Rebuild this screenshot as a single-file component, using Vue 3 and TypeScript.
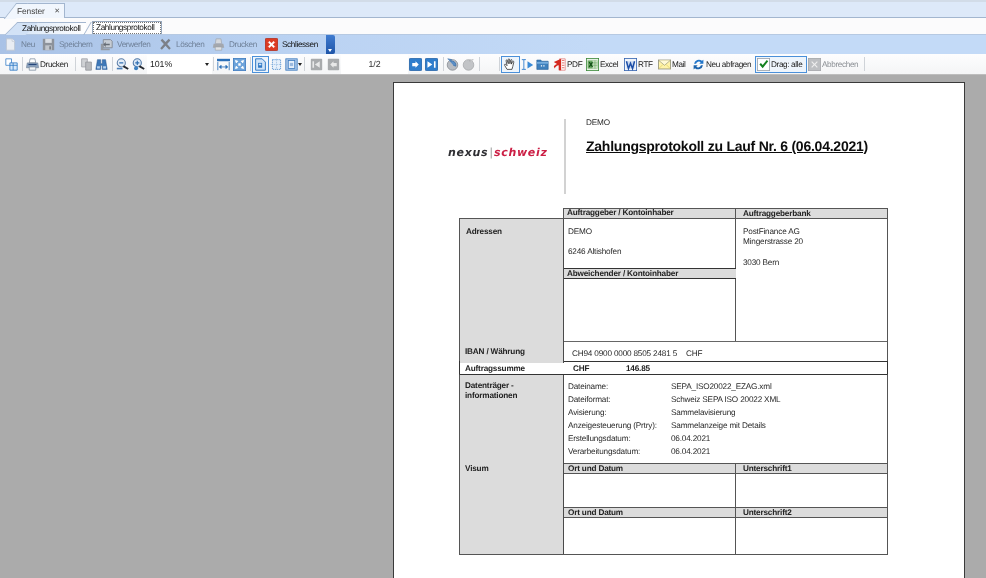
<script setup lang="ts">
import { computed } from 'vue'

type Raw = [number, string, string?, string?]

// [left edge, kind, icon, label]; each item runs up to the left edge of the next one
function layout(raw: Raw[], end: number) {
  return raw.map((r, i) => ({
    x: r[0],
    kind: r[1],
    icon: r[2] ?? '',
    label: r[3] ?? '',
    w: (i + 1 < raw.length ? raw[i + 1][0] : end) - r[0],
  }))
}

const ribbon = computed(() =>
  layout(
    [
      [4, 'off', 'neu', 'Neu'],
      [42, 'off', 'save', 'Speichern'],
      [100, 'off', 'discard', 'Verwerfen'],
      [159, 'off', 'x', 'Löschen'],
      [212, 'off', 'printgray', 'Drucken'],
      [265, 'on', 'close', 'Schliessen'],
    ],
    325,
  ),
)

const tools = computed(() =>
  layout(
    [
      [4, 'tool', 'layout'],
      [21, 'sep'],
      [25, 'tool', 'print', 'Drucken'],
      [74, 'sep'],
      [79, 'tool', 'copy'],
      [94, 'tool', 'binoc'],
      [111, 'sep'],
      [115, 'tool', 'zoomout'],
      [131, 'tool', 'zoomin'],
      [147, 'zoom'],
      [212, 'sep'],
      [216, 'tool', 'fitw'],
      [232, 'tool', 'fitp'],
      [249, 'sep'],
      [252, 'active', 'pg1'],
      [269, 'tool', 'pg2'],
      [284, 'tool', 'pg3'],
      [298, 'arrow'],
      [303, 'sep'],
      [309, 'tool', 'first'],
      [326, 'tool', 'prev'],
      [341, 'pager'],
      [408, 'tool', 'next'],
      [424, 'tool', 'last'],
      [442, 'sep'],
      [445, 'tool', 'back'],
      [461, 'tool', 'fwd'],
      [478, 'sep'],
      [498, 'sep'],
      [501, 'active', 'hand'],
      [520, 'tool', 'cursor'],
      [535, 'tool', 'folder'],
      [552, 'tool', 'pdf', 'PDF'],
      [585, 'tool', 'excel', 'Excel'],
      [623, 'tool', 'word', 'RTF'],
      [657, 'tool', 'mail', 'Mail'],
      [691, 'tool', 'refresh', 'Neu abfragen'],
      [755, 'active', 'check', 'Drag: alle'],
      [807, 'off', 'cancel', 'Abbrechen'],
      [863, 'sep'],
    ],
    866,
  ),
)

const details = [
  ['Dateiname:', 'SEPA_ISO20022_EZAG.xml'],
  ['Dateiformat:', 'Schweiz SEPA ISO 20022 XML'],
  ['Avisierung:', 'Sammelavisierung'],
  ['Anzeigesteuerung (Prtry):', 'Sammelanzeige mit Details'],
  ['Erstellungsdatum:', '06.04.2021'],
  ['Verarbeitungsdatum:', '06.04.2021'],
]
</script>

<template>
  <div class="app">
    <svg class="defs" width="0" height="0">
      <symbol id="i-neu" viewBox="0 0 16 16"><path d="M3 1h7l3 3v11H3z" fill="#e9edf3" stroke="#bcc5d2"/><path d="M10 1v3h3" fill="#fff" stroke="#bcc5d2"/></symbol>
      <symbol id="i-save" viewBox="0 0 16 16"><path d="M1 1h14v14H1z" fill="#8d929a"/><path d="M4 1h8v5H4z" fill="#d9dde3"/><path d="M4 9h8v6H4z" fill="#c1c5cb"/><path d="M9 10h2v4H9z" fill="#777c84"/></symbol>
      <symbol id="i-discard" viewBox="0 0 16 16"><path d="M4 2h9l2 2v8H4z" fill="#c6ccd4" stroke="#7d838c"/><path d="M1 7h3v6h8v2H1z" fill="#959aa2"/><path d="M12 7H7V5L4 8l3 3V9h5z" fill="#666c75"/></symbol>
      <symbol id="i-x" viewBox="0 0 16 16"><path d="M2 3l2-2 4 4 4-4 2 2-4 4.500 4.500 5-2 2-4.500-5-4.500 5-2-2 4.500-5z" fill="#7c8088"/></symbol>
      <symbol id="i-printgray" viewBox="0 0 16 16"><path d="M5 1h6l1 6H4z" fill="#d4d7dc" stroke="#969aa1" stroke-width=".7"/><path d="M2 7h12l1 5H1z" fill="#a3a7ae"/><path d="M4 11h8v4H4z" fill="#dfe1e5" stroke="#959aa0" stroke-width=".7"/></symbol>
      <symbol id="i-close" viewBox="0 0 16 16"><rect x=".5" y=".5" width="15" height="15" rx="1" fill="#dc3b24" stroke="#b32a18"/><path d="M4 5.500l1.500-1.500L8 6.500 10.500 4 12 5.500 9.500 8l2.500 2.500-1.500 1.500L8 9.500 5.500 12 4 10.500 6.500 8z" fill="#fff" stroke="#fff" stroke-width=".5"/></symbol>
      <symbol id="i-layout" viewBox="0 0 16 16"><path d="M1 1h7v8H1z" fill="#fff" stroke="#3d83c9"/><path d="M6 6h9v9H6z" fill="#d6e8fa" stroke="#2e78c4"/><path d="M6 9h9M10 6v9" stroke="#2e78c4"/></symbol>
      <symbol id="i-print" viewBox="0 0 16 16"><path d="M5 1h6l1 5H4z" fill="#fff" stroke="#6a7c92" stroke-width=".8"/><path d="M1.500 6h13l1 6H.5z" fill="#8fa6c2" stroke="#5a6c82" stroke-width=".6"/><path d="M3 8h10" stroke="#26477a" stroke-width="1.500"/><path d="M4 11h8v4H4z" fill="#f4f6f8" stroke="#6a7c92" stroke-width=".8"/></symbol>
      <symbol id="i-copy" viewBox="0 0 16 16"><path d="M2 1h7v10H2z" fill="#cfd1d4" stroke="#a0a3a7"/><path d="M7 5h7v10H7z" fill="#b8babd" stroke="#95989c"/></symbol>
      <symbol id="i-binoc" viewBox="0 0 16 16"><path d="M3 2h4v5h2V2h4l2 12H9V9H7v5H1z" fill="#3e78b8" stroke="#1f4f88" stroke-width=".6"/><path d="M2.500 10h3.500v3H2.500zM10 10h3.500v3H10z" fill="#b7d2ef"/></symbol>
      <symbol id="i-zoomout" viewBox="0 0 16 16"><circle cx="6.500" cy="6" r="5" fill="#e4edf7" stroke="#5b7ea8" stroke-width="1.300"/><path d="M4 6h5" stroke="#2e6db0" stroke-width="1.500"/><path d="M9 10l6 3.500" stroke="#24282e" stroke-width="2.400"/><path d="M1 12h7v2H1z" fill="#4a7fb8"/></symbol>
      <symbol id="i-zoomin" viewBox="0 0 16 16"><circle cx="6.500" cy="6" r="5" fill="#dbe8f6" stroke="#4f77a6" stroke-width="1.300"/><path d="M4 6h5M6.500 3.500v5" stroke="#2e6db0" stroke-width="1.400"/><path d="M9 10l6 3.500" stroke="#24282e" stroke-width="2.400"/><circle cx="5" cy="12.500" r="2.500" fill="#3d81c2"/></symbol>
      <symbol id="i-fitw" viewBox="0 0 16 16"><path d="M0 1v3h16V1z" fill="#2a6fb8"/><path d="M1 5v10M15 5v10" stroke="#2a6fb8"/><path d="M3 11h10M3 11l2-2v4zM13 11l-2-2v4z" stroke="#2a6fb8" fill="#2a6fb8"/></symbol>
      <symbol id="i-fitp" viewBox="0 0 16 16"><rect x=".5" y=".5" width="15" height="15" fill="#6da3da" stroke="#3f7cbf"/><path d="M3 3l3 1-2 2zM13 3l-1 3-2-2zM3 13l1-3 2 2zM13 13l-3-1 2-2z" fill="#fff" stroke="#fff"/><rect x="6.500" y="6.500" width="3" height="3" fill="#fff"/></symbol>
      <symbol id="i-pg1" viewBox="0 0 16 16"><path d="M2 1h8l4 4v10H2z" fill="#cfe3f8" stroke="#2e78c4" stroke-width="1.200"/><path d="M5 6h5v6H5z" fill="#2e78c4"/><path d="M6 7h3v2H6z" fill="#cfe3f8"/></symbol>
      <symbol id="i-pg2" viewBox="0 0 16 16"><rect x="3" y="2" width="10" height="12" fill="#e6f0fb" stroke="#4a8bcd" stroke-dasharray="1.500 1"/><path d="M1 8h14M8 1v14" stroke="#8db5de" stroke-dasharray="1 1"/></symbol>
      <symbol id="i-pg3" viewBox="0 0 16 16"><rect x="1" y="1" width="14" height="14" fill="#a9c6e8" stroke="#3f7cbf"/><rect x="4" y="3" width="8" height="10" fill="#e6f0fb" stroke="#3f7cbf"/><path d="M6 6h4v4H6z" fill="#9ab9de"/></symbol>
      <symbol id="i-first" viewBox="0 0 16 16"><rect x="1" y="1" width="14" height="14" rx="1" fill="#a9abad"/><path d="M3 4h2v8H3zM12 4v8L6 8z" fill="#e8e8e8"/></symbol>
      <symbol id="i-prev" viewBox="0 0 16 16"><rect x="1" y="1" width="14" height="14" rx="1" fill="#a9abad"/><path d="M12 6v4H8v2L4 8l4-4v2z" fill="#e8e8e8"/></symbol>
      <symbol id="i-next" viewBox="0 0 16 16"><rect x=".5" y=".5" width="15" height="15" rx="1" fill="#2f7dcc" stroke="#1d5fa5"/><path d="M4 6v4h4v2l4-4-4-4v2z" fill="#fff"/></symbol>
      <symbol id="i-last" viewBox="0 0 16 16"><rect x=".5" y=".5" width="15" height="15" rx="1" fill="#2f7dcc" stroke="#1d5fa5"/><path d="M3 4l6 4-6 4zM11 4h2v8h-2z" fill="#fff"/></symbol>
      <symbol id="i-back" viewBox="0 0 16 16"><circle cx="8" cy="8.500" r="6.500" fill="#b8bcc2" stroke="#8a8e94"/><path d="M2 1l5 1-1.500 2A5 5 0 0 1 12 10l-3-1" fill="#5a8ec6" stroke="#3f74ad"/></symbol>
      <symbol id="i-fwd" viewBox="0 0 16 16"><circle cx="8" cy="8.500" r="6.500" fill="#c2c4c7" stroke="#a8aaad"/><path d="M14 2l-5 1 1.500 2" fill="#d8d9db" stroke="#a8aaad"/></symbol>
      <symbol id="i-hand" viewBox="0 0 16 16"><path d="M5 14L2 9c-.7-1.300.7-1.800 1.500-1L5 9.500 3.800 3.500c-.3-1.300 1.300-1.500 1.600-.4L6.500 7 6.400 2c0-1.300 1.700-1.300 1.700 0L8.500 7l.9-4.300c.3-1.200 1.800-.9 1.600.3L10.300 7.500l1.500-3c.5-1 1.900-.5 1.500.6L12 10.500 11 14z" fill="#fff" stroke="#222" stroke-width=".9"/></symbol>
      <symbol id="i-cursor" viewBox="0 0 16 16"><path d="M1 2h2.500M6 2H3.500v12H1M3.500 14H6" fill="none" stroke="#2f7dcc" stroke-width="1.100"/><path d="M8 4l7 4.500L8 13z" fill="#3a8ad6"/></symbol>
      <symbol id="i-folder" viewBox="0 0 16 16"><path d="M1 4V2.500h5L7 4h8v10H1z" fill="#3f80bd" stroke="#255e96" stroke-width=".7"/><path d="M1 5h14v2H1z" fill="#7ab0e0"/><path d="M6 9h1.500v1.500H6zM9 9h1.500v1.500H9z" fill="#fff"/></symbol>
      <symbol id="i-pdf" viewBox="0 0 16 16"><path d="M8 1h7v14H8z" fill="#fff" stroke="#d9534f" stroke-width=".7"/><path d="M1 5l9-4v14H7V9C5 9 3 11 2 13l-1-3c1-1 3-2 4-2.500z" fill="#d5281f"/><path d="M11 3h3M11 6h3M11 9h3M11 12h3" stroke="#d5281f" stroke-width=".8"/></symbol>
      <symbol id="i-excel" viewBox="0 0 16 16"><rect x=".5" y=".5" width="15" height="15" fill="#e9f2e4" stroke="#3c8a3a"/><path d="M2 3h12v10H2z" fill="#69a862"/><path d="M8 3h6v10H8z" fill="#c8dfc2"/><path d="M4 5l4 6M8 5l-4 6" stroke="#134f18" stroke-width="1.500"/><path d="M8 6h6M8 9h6M11 3v10" stroke="#69a862" stroke-width=".7"/></symbol>
      <symbol id="i-word" viewBox="0 0 16 16"><rect x=".5" y=".5" width="15" height="15" fill="#f1f5fb" stroke="#3564b0"/><path d="M3 4h10v9H3z" fill="#c9d9f0"/><path d="M3 4l2.500 9L8 6.500 10.500 13 13 4" fill="none" stroke="#1c4ea8" stroke-width="1.800"/></symbol>
      <symbol id="i-mail" viewBox="0 0 16 16"><rect x=".5" y="2.500" width="15" height="11" fill="#fff3a8" stroke="#8f8f78"/><path d="M1 3l7 6 7-6" fill="#fff9d6" stroke="#8f8f78" stroke-width=".8"/><path d="M1 13l5-5M15 13l-5-5" stroke="#d9c95c" stroke-width=".8"/></symbol>
      <symbol id="i-refresh" viewBox="0 0 16 16"><path d="M2.500 7a6 6 0 0 1 9.800-3.500L14 2v5H9l1.700-1.700A3.500 3.500 0 0 0 5 7z" fill="#2175c9"/><path d="M13.500 9a6 6 0 0 1-9.800 3.500L2 14V9h5l-1.700 1.700A3.500 3.500 0 0 0 11 9z" fill="#1b63ad"/></symbol>
      <symbol id="i-check" viewBox="0 0 16 16"><rect x=".5" y=".5" width="15" height="15" fill="#fff" stroke="#9aa0a8"/><path d="M3 8l1.800-1.800L7 8.500l5-6 1.800 1.500L7 12.500z" fill="#14811f"/></symbol>
      <symbol id="i-cancel" viewBox="0 0 16 16"><rect x=".5" y=".5" width="15" height="15" fill="#bdbfc2" stroke="#a5a7aa"/><path d="M4 5l1-1 3 3 3-3 1 1-3 3 3 3-1 1-3-3-3 3-1-1 3-3z" fill="#eee"/></symbol>
    </svg>

    <div class="strip-top">
      <div class="tab-main">
        <span>Fenster</span>
        <span class="tab-x">✕</span>
      </div>
    </div>

    <div class="strip-sub">
      <div class="sub-tab"><span>Zahlungsprotokoll</span></div>
      <div class="sub-tab-on"><span>Zahlungsprotokoll</span></div>
    </div>

    <div class="ribbon">
      <div v-for="it in ribbon" :key="it.x" class="rb-item" :class="it.kind" :style="{ width: it.w + 'px' }">
        <svg class="ic"><use :href="'#i-' + it.icon" /></svg>
        <span>{{ it.label }}</span>
      </div>
      <div class="overflow"><i></i></div>
    </div>

    <div class="toolbar">
      <template v-for="it in tools" :key="it.x">
        <div v-if="it.kind === 'sep'" class="slot" :style="{ width: it.w + 'px' }"><i class="sep"></i></div>
        <div v-else-if="it.kind === 'zoom'" class="slot combo" :style="{ width: it.w + 'px' }">
          <span>101%</span><i class="caret"></i>
        </div>
        <div v-else-if="it.kind === 'pager'" class="slot pager" :style="{ width: it.w + 'px' }">1/2</div>
        <div v-else-if="it.kind === 'arrow'" class="slot" :style="{ width: it.w + 'px' }"><i class="caret small"></i></div>
        <div v-else class="slot tb-item" :class="it.kind" :style="{ width: it.w + 'px' }">
          <svg class="ic"><use :href="'#i-' + it.icon" /></svg>
          <span v-if="it.label">{{ it.label }}</span>
        </div>
      </template>
    </div>

    <main class="stage">
      <section class="page">
        <header class="page-head">
          <div class="logo"><b class="nx">nexus</b><span class="bar">|</span><b class="ch">schweiz</b></div>
          <div class="rule"></div>
          <div class="title-box">
            <div class="client">DEMO</div>
            <h1>Zahlungsprotokoll zu Lauf Nr. 6 (06.04.2021)</h1>
          </div>
        </header>

        <div class="report">
          <div class="heads">
            <div class="hd">Auftraggeber / Kontoinhaber</div>
            <div class="hd hd-r">Auftraggeberbank</div>
          </div>

          <div class="row r-addr">
            <div class="lab lab-addr">Adressen</div>
            <div class="mid">
              <p class="addr">DEMO</p>
              <p class="addr gap">6246 Altishofen</p>
              <div class="hd sub">Abweichender / Kontoinhaber</div>
            </div>
            <div class="right">
              <p>PostFinance AG</p>
              <p>Mingerstrasse 20</p>
              <p class="gap2">3030 Bern</p>
            </div>
          </div>

          <div class="row r-iban">
            <div class="lab lab-iban">IBAN / Währung</div>
            <div class="iban"><span>CH94 0900 0000 8505 2481 5</span><span class="cur">CHF</span></div>
          </div>

          <div class="r-sum">
            <b class="s1">Auftragssumme</b><b class="s2">CHF</b><b>146.85</b>
          </div>

          <div class="row r-data">
            <div class="lab lab-data">
              <div>Datenträger -<br />informationen</div>
              <div class="visum">Visum</div>
            </div>
            <div class="data-main">
              <dl class="details">
                <template v-for="d in details" :key="d[0]">
                  <dt>{{ d[0] }}</dt>
                  <dd>{{ d[1] }}</dd>
                </template>
              </dl>
              <div class="signs">
                <div class="hd">Ort und Datum</div>
                <div class="hd hd-r">Unterschrift1</div>
                <div class="blank b1"></div>
                <div class="blank b1 br"></div>
                <div class="hd">Ort und Datum</div>
                <div class="hd hd-r">Unterschrift2</div>
                <div class="blank b2"></div>
                <div class="blank b2 br"></div>
              </div>
            </div>
          </div>
        </div>
      </section>
    </main>
  </div>
</template>

<style scoped>
.app {
  width: 986px;
  height: 578px;
  overflow: hidden;
  display: flex;
  flex-direction: column;
  font-family: "Liberation Sans", Arial, sans-serif;
  font-size: 8.200px;
  letter-spacing: -0.37px;
  text-rendering: geometricPrecision;
  color: #222;
  background: #ababab;
  filter: blur(0.3px);
}
.defs { position: absolute; }

.strip-top {
  height: 18px;
  flex: none;
  box-sizing: border-box;
  padding: 3px 0 0 16px;
  background: linear-gradient(#d2dce8 0, #d2dce8 2px, #dde9f9 2px);
  border-bottom: 1px solid #a3b6cf;
}
.tab-main {
  position: relative;
  width: 49px;
  height: 15px;
  box-sizing: border-box;
  display: flex;
  align-items: center;
  justify-content: space-between;
  padding: 0 4px 0 1px;
  background: #f1f6fd;
  border: 1px solid #a3b6cf;
  border-left: 0;
  border-bottom: 0;
  color: #444;
  font-size: 8.400px;
  letter-spacing: -0.1px;
}
.tab-main::before {
  content: "";
  position: absolute;
  left: -6px;
  top: -1px;
  width: 11px;
  height: 15px;
  background: #f1f6fd;
  border-left: 1px solid #a3b6cf;
  border-top: 1px solid #a3b6cf;
  transform: skewX(-38deg);
  z-index: 0;
}
.tab-main span { position: relative; z-index: 1; }
.tab-x { font-size: 7px; color: #555; }

.strip-sub {
  height: 17px;
  flex: none;
  box-sizing: border-box;
  display: flex;
  align-items: flex-end;
  padding-left: 18px;
  background: #fbfbfc;
  border-bottom: 1px solid #b6c9e2;
}
.sub-tab {
  position: relative;
  width: 68px;
  height: 12px;
  line-height: 12px;
  margin-right: 6px;
  box-sizing: border-box;
  padding-left: 4px;
  color: #111;
  background: linear-gradient(to right, #d6e5f7, #ffffff);
  border-top: 1px solid #a3b6cf;
  white-space: nowrap;
}
.sub-tab span { position: relative; z-index: 1; }
.sub-tab::before {
  content: "";
  position: absolute;
  left: -7px;
  top: -1px;
  width: 20px;
  height: 12px;
  background: #d2e2f6;
  border-left: 1px solid #a3b6cf;
  border-top: 1px solid #a3b6cf;
  transform: skewX(-45deg);
}
.sub-tab::after {
  content: "";
  position: absolute;
  top: -1px;
  right: -2px;
  width: 1px;
  height: 13px;
  background: #a3b6cf;
  transform: skewX(-30deg);
}
.sub-tab-on {
  width: 70px;
  height: 13px;
  box-sizing: border-box;
  padding: 1px;
  background: #fff;
  border: 1px solid #98a8bd;
  border-bottom: 0;
  white-space: nowrap;
  color: #111;
}
.sub-tab-on span {
  display: block;
  height: 10px;
  line-height: 10px;
  padding-left: 2px;
  outline: 1px dotted #777;
  outline-offset: 0;
}

.ribbon {
  height: 19px;
  flex: none;
  display: flex;
  align-items: center;
  box-sizing: border-box;
  padding-left: 4px;
  background: linear-gradient(to right, #a9c2e6, #bad2f2 30%, #c3daf7 60%);
  position: relative;
}
.rb-item {
  display: flex;
  align-items: center;
  gap: 4px;
  flex: none;
  white-space: nowrap;
}
.rb-item.off { color: #6f8098; }
.rb-item.on { color: #111; }
.overflow {
  width: 9px;
  height: 19px;
  margin-left: 1px;
  flex: none;
  background: linear-gradient(#3f7bd0, #1f55a8);
  border-radius: 0 2px 2px 0;
  position: relative;
}
.overflow i {
  position: absolute;
  left: 2px;
  bottom: 2px;
  width: 0;
  height: 0;
  border: 2px solid transparent;
  border-top: 3px solid #fff;
  border-bottom: 0;
}
.ic { width: 13px; height: 13px; flex: none; display: block; }

.toolbar {
  height: 21px;
  flex: none;
  display: flex;
  align-items: center;
  box-sizing: border-box;
  padding-left: 4px;
  background: linear-gradient(#fdfdfe, #f4f5f6);
  border-bottom: 1px solid #bdbdbd;
}
.slot {
  height: 18px;
  flex: none;
  display: flex;
  align-items: center;
  box-sizing: border-box;
  white-space: nowrap;
}
.sep { width: 1px; height: 14px; margin-left: 1px; background: #cfd3d8; display: block; }
.tb-item { gap: 1px; padding-left: 1px; color: #1c1c1c; }
.tb-item.off { color: #8b8f94; }
.tb-item.active {
  border: 1px solid #4a90d9;
  background: #eef5fc;
  padding-left: 1px;
  gap: 1px;
  height: 17px;
}
.combo {
  background: #fff;
  padding-left: 3px;
  justify-content: space-between;
  padding-right: 3px;
  height: 19px;
  font-size: 8.800px;
  letter-spacing: -0.1px;
}
.pager {
  background: #fff;
  justify-content: center;
  height: 19px;
  font-size: 8.800px;
  letter-spacing: -0.1px;
  color: #333;
}
.caret {
  width: 0;
  height: 0;
  border: 2.500px solid transparent;
  border-top: 3px solid #222;
  border-bottom: 0;
  display: block;
}

.stage {
  flex: 1;
  min-height: 0;
  display: flex;
  justify-content: flex-end;
  padding: 7px 21px 0 0;
  background: #ababab;
  overflow: hidden;
}
.page {
  width: 572px;
  box-sizing: border-box;
  height: 520px;
  flex: none;
  background: #fff;
  border: 1px solid #3a3a3a;
  border-width: 1px 1px 0 1px;
  padding: 36px 0 0 0;
  color: #2a2a2a;
}

.page-head {
  display: flex;
  height: 89px;
}
.logo {
  width: 170px;
  box-sizing: border-box;
  padding: 28px 0 0 54px;
  font-family: "DejaVu Sans", sans-serif;
  font-size: 11px;
  font-style: italic;
  letter-spacing: 0.7px;
  line-height: 12px;
  white-space: nowrap;
}
.nx { color: #2f2f33; }
.bar { color: #444; font-style: normal; font-weight: 300; margin: 0 1px; letter-spacing: 0; }
.ch { color: #cc1f45; }
.rule { width: 2px; height: 75px; background: #d2d2d2; flex: none; }
.title-box { padding: 0 0 0 20px; margin-top: -1px; }
.client { font-size: 8.200px; line-height: 10px; letter-spacing: -0.18px; }
h1 {
  margin: 10px 0 0 0;
  font-size: 14px;
  line-height: 17px;
  font-weight: 700;
  color: #0c0c0c;
  text-decoration: underline;
  white-space: nowrap;
  letter-spacing: -0.24px;
}

.report {
  width: 429px;
  margin-left: 65px;
  font-size: 8.200px;
  letter-spacing: -0.18px;
}
.heads {
  display: grid;
  grid-template-columns: 172px 153px;
  margin-left: 104px;
}
.hd {
  height: 11px;
  box-sizing: border-box;
  line-height: 8px;
  font-weight: 700;
  padding-left: 3px;
  background: #dcdcdc;
  border: 1px solid #555;
  border-right: 0;
  color: #222;
}
.hd-r { border-right: 1px solid #555; padding-left: 7px; line-height: 10px; }

.row {
  display: grid;
  grid-template-columns: 104px 172px 153px;
  border: 1px solid #555;
  border-top: 0;
  border-bottom: 0;
  box-sizing: border-box;
}
.lab {
  background: #dcdcdc;
  font-weight: 700;
  color: #222;
  padding-left: 5px;
  border-right: 1px solid #4a4a4a;
}
.r-addr { height: 123px; margin-top: -1px; border-top: 1px solid #555; }
.lab-addr { padding: 8px 0 0 6px; }
.mid { border-right: 1px solid #555; padding-top: 8px; display: flex; flex-direction: column; }
.mid p, .right p { margin: 0; line-height: 10px; padding-left: 4px; }
.addr.gap { margin-top: 10px; }
.sub {
  width: 172px;
  height: 11px;
  margin-top: 11px;
  padding-left: 3px;
  line-height: 10px;
  border-width: 1px 0;
  border-color: #333;
}
.right { padding-top: 8px; }
.right p { padding-left: 7px; }
.right p.gap2 { margin-top: 11px; }

.r-iban {
  grid-template-columns: 104px 1fr;
  height: 20px;
}
.lab-iban { line-height: 22px; }
.iban {
  padding: 1px 0 0 8px;
  display: flex;
  align-items: center;
  border-top: 1px solid #666;
}
.cur { margin-left: 9px; }

.r-sum {
  height: 14px;
  box-sizing: border-box;
  display: flex;
  align-items: center;
  padding-left: 5px;
  background: #fff;
  border: 1px solid #333;
  color: #222;
}
.s1 { width: 108px; }
.s2 { width: 53px; }

.r-data {
  grid-template-columns: 104px 1fr;
  height: 181px;
  border-bottom: 1px solid #555;
  margin-top: -1px;
  border-top: 1px solid #333;
}
.lab-data { padding-top: 6px; line-height: 9.500px; display: flex; flex-direction: column; }
.visum { margin-top: 64px; }
.data-main { display: flex; flex-direction: column; }
.details {
  margin: 0;
  height: 88px;
  box-sizing: border-box;
  padding: 5px 0 0 4px;
  display: grid;
  grid-template-columns: 103px 1fr;
  grid-auto-rows: 13px;
  align-items: center;
}
.details dt, .details dd { margin: 0; white-space: nowrap; }
.signs {
  display: grid;
  grid-template-columns: 171px 1fr;
  grid-template-rows: 11px 33px 11px 1fr;
  flex: 1;
}
.signs .hd { border-left: 0; line-height: 9px; padding-left: 4px; }
.signs .hd-r { padding-left: 7px; border-right: 0; border-left: 1px solid #555; }
.blank { border: 0; }
.br { border-left: 1px solid #555; }
</style>
